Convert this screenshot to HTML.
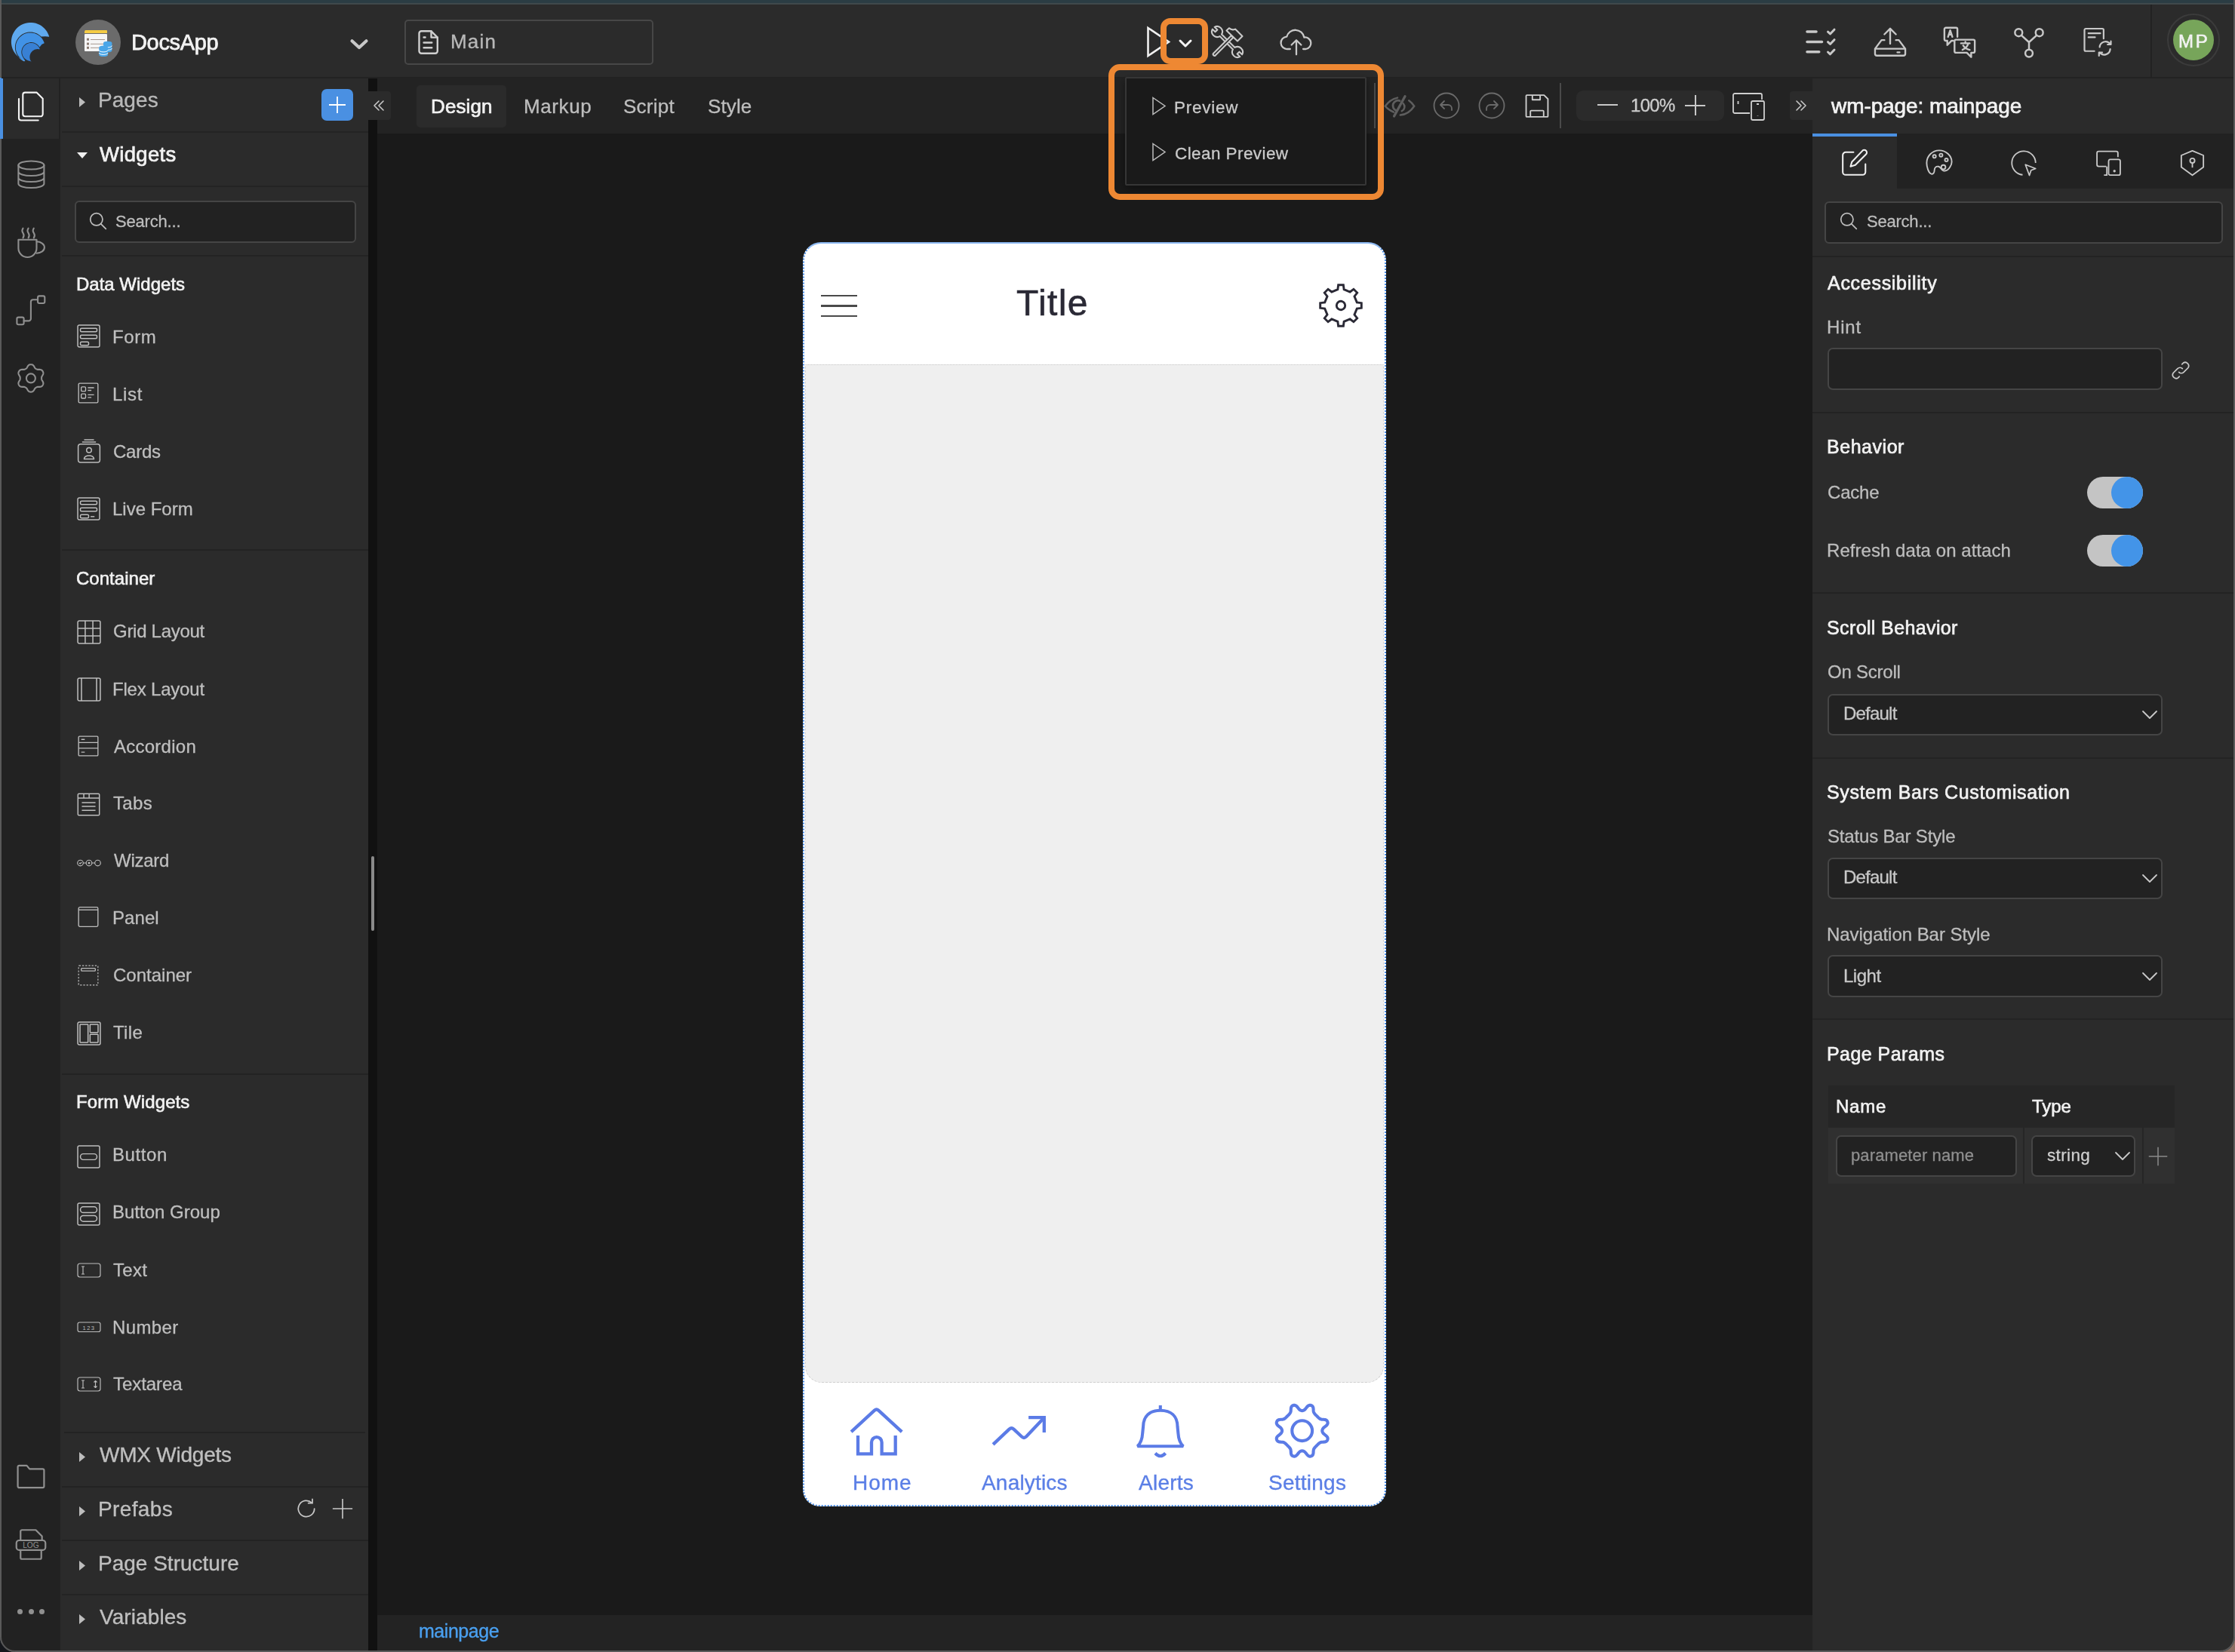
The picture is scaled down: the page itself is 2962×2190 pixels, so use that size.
<!DOCTYPE html><html><head><meta charset="utf-8"><style>
html,body{margin:0;padding:0;}
body{width:2962px;height:2190px;overflow:hidden;position:relative;background:#1c1c1c;font-family:"Liberation Sans",sans-serif;}
.t{position:absolute;line-height:1;white-space:nowrap;will-change:transform;}
.r{position:absolute;box-sizing:border-box;}
</style></head><body>
<div class="r" style="left:0px;top:0px;width:2962px;height:2190px;background:#2b2b2b;border-radius:0 0 16px 16px;"></div>
<div class="r" style="left:0px;top:0px;width:2962px;height:4px;background:#2b3d44;border-radius:0px;"></div>
<div class="r" style="left:0px;top:4px;width:2962px;height:2px;background:#40494c;border-radius:0px;"></div>
<div class="r" style="left:0px;top:0px;width:2px;height:2190px;background:#5a5a5a;border-radius:0 0 0 16px;"></div>
<div class="r" style="left:2px;top:6px;width:2958px;height:97px;background:#2b2b2b;border-radius:0px;"></div>
<div class="r" style="left:2px;top:102px;width:2958px;height:1px;background:#242424;border-radius:0px;"></div>
<div class="r" style="left:2px;top:103px;width:78px;height:2085px;background:#222222;border-radius:0px;"></div>
<div class="r" style="left:4px;top:103px;width:74px;height:81px;background:#2b2b2b;border-radius:0px;"></div>
<div class="r" style="left:0px;top:103px;width:4px;height:81px;background:#4a90e2;border-radius:0px;"></div>
<div class="r" style="left:80px;top:103px;width:408px;height:2085px;background:#2b2b2b;border-radius:0px;"></div>
<div class="r" style="left:82px;top:174px;width:406px;height:2px;background:#232323;border-radius:0px;"></div>
<div class="r" style="left:82px;top:246px;width:406px;height:2px;background:#232323;border-radius:0px;"></div>
<div class="r" style="left:82px;top:338px;width:406px;height:2px;background:#232323;border-radius:0px;"></div>
<div class="r" style="left:82px;top:728px;width:406px;height:2px;background:#232323;border-radius:0px;"></div>
<div class="r" style="left:82px;top:1423px;width:406px;height:2px;background:#232323;border-radius:0px;"></div>
<div class="r" style="left:82px;top:1970px;width:406px;height:2px;background:#232323;border-radius:0px;"></div>
<div class="r" style="left:82px;top:2041px;width:406px;height:2px;background:#232323;border-radius:0px;"></div>
<div class="r" style="left:82px;top:2113px;width:406px;height:2px;background:#232323;border-radius:0px;"></div>
<div class="r" style="left:85px;top:1898px;width:399px;height:2px;background:#232323;border-radius:0px;"></div>
<div class="r" style="left:488px;top:103px;width:12px;height:2085px;background:#111111;border-radius:0px;"></div>
<div class="r" style="left:492px;top:1135px;width:4px;height:99px;background:#8a8a8a;border-radius:2px;"></div>
<div class="r" style="left:500px;top:103px;width:1902px;height:74px;background:#232323;border-radius:0px;"></div>
<div class="r" style="left:500px;top:177px;width:1902px;height:1964px;background:#1a1a1a;border-radius:0px;"></div>
<div class="r" style="left:500px;top:2141px;width:1902px;height:47px;background:#232323;border-radius:0px;"></div>
<div class="r" style="left:2402px;top:103px;width:558px;height:2085px;background:#2b2b2b;border-radius:0px;"></div>
<div class="r" style="left:2402px;top:177px;width:558px;height:73px;background:#222222;border-radius:0px;"></div>
<div class="r" style="left:2402px;top:177px;width:112px;height:73px;background:#2b2b2b;border-radius:0px;"></div>
<div class="r" style="left:2402px;top:177px;width:112px;height:4px;background:#4a90e2;border-radius:0px;"></div>
<div class="r" style="left:2402px;top:338.5px;width:558px;height:2.0px;background:#232323;border-radius:0px;"></div>
<div class="r" style="left:2402px;top:546px;width:558px;height:2px;background:#232323;border-radius:0px;"></div>
<div class="r" style="left:2402px;top:785px;width:558px;height:2px;background:#232323;border-radius:0px;"></div>
<div class="r" style="left:2402px;top:1004px;width:558px;height:2px;background:#232323;border-radius:0px;"></div>
<div class="r" style="left:2402px;top:1350px;width:558px;height:2px;background:#232323;border-radius:0px;"></div>
<div class="r" style="left:2px;top:102px;width:2958px;height:2px;background:#222222;border-radius:0px;"></div>
<div class="r" style="left:2960px;top:0px;width:2px;height:2190px;background:#5a5a5a;border-radius:0px;"></div>
<div class="r" style="left:0px;top:2188px;width:2962px;height:2px;background:#5a5a5a;border-radius:0px;"></div>
<svg class="r" style="left:8px;top:24px;width:64px;height:64px;" viewBox="8 24 64 64" fill="none"><polygon points="65.23,48.87 64.41,46.35 63.33,43.92 62.01,41.61 60.45,39.46 58.68,37.48 56.71,35.69 54.57,34.12 52.28,32.77 49.86,31.67 47.34,30.83 44.75,30.25 42.11,29.95 39.45,29.92 36.80,30.17 34.20,30.69 31.66,31.47 29.22,32.52 26.90,33.81 24.72,35.34 22.72,37.08 20.90,39.03 19.30,41.15 17.93,43.42 16.80,45.83 15.92,48.34 15.31,50.92 14.97,53.56 14.91,56.21 15.12,58.86 15.61,61.48 16.36,64.02 17.37,66.48 18.64,68.82 20.14,71.01 21.85,73.04 23.77,74.88 25.87,76.51 28.13,77.91 30.52,79.07 33.02,79.98 32.27,81.49 30.65,80.72 29.11,79.81 27.66,78.76 26.30,77.60 25.06,76.32 23.92,74.93 22.92,73.45 22.05,71.89 21.32,70.26 20.74,68.57 20.30,66.83 20.03,65.06 19.91,63.28 19.94,61.49 20.14,59.71 20.49,57.96 20.99,56.24 21.64,54.58 22.44,52.97 23.37,51.45 24.44,50.01 25.62,48.67 26.92,47.44 28.33,46.34 29.82,45.35 31.40,44.51 33.04,43.80 34.74,43.25 36.48,42.84 38.25,42.59 40.04,42.50 41.83,42.57 43.60,42.79 45.35,43.16 47.06,43.69 48.71,44.37 50.30,45.19 51.81,46.15 53.24,47.24 54.55,48.45 60.00,48.20" fill="#5fa9ee"/><polygon points="58.80,57.29 58.14,55.43 57.30,53.64 56.28,51.95 55.09,50.37 53.75,48.92 52.27,47.61 50.66,46.46 48.95,45.48 47.14,44.68 45.26,44.07 43.33,43.65 41.37,43.44 39.39,43.42 37.42,43.60 35.49,43.98 33.60,44.56 31.78,45.32 30.04,46.27 28.41,47.39 26.91,48.67 25.54,50.09 24.32,51.65 23.27,53.32 22.40,55.10 21.70,56.95 21.20,58.86 20.90,60.81 20.80,62.78 20.90,64.76 21.20,66.71 21.69,68.62 22.38,70.47 23.25,72.25 24.30,73.92 25.52,75.48 26.88,76.91 28.39,78.19 30.01,79.31 31.75,80.26 33.56,81.03 30.13,75.45 29.66,74.55 29.26,73.62 28.93,72.66 28.68,71.68 28.51,70.68 28.42,69.68 28.40,68.66 28.47,67.65 28.62,66.65 28.84,65.66 29.14,64.69 29.52,63.75 29.96,62.84 30.48,61.97 31.07,61.15 31.71,60.37 32.42,59.64 33.18,58.97 33.99,58.37 34.85,57.83 35.75,57.36 36.68,56.96 37.64,56.63 38.62,56.38 39.62,56.21 40.62,56.12 41.64,56.10 42.65,56.17 43.65,56.32 44.64,56.54 45.61,56.84 46.55,57.22 47.46,57.66 48.33,58.18 49.15,58.77 49.93,59.41 50.66,60.12 51.33,60.88 51.93,61.69 52.47,62.55 55.50,58.80" fill="#4192e6"/><polygon points="52.52,64.47 51.98,63.31 51.31,62.21 50.54,61.19 49.66,60.25 48.69,59.42 47.63,58.69 46.50,58.08 45.32,57.59 44.09,57.23 42.83,57.00 41.55,56.90 40.27,56.94 39.00,57.12 37.75,57.43 36.55,57.87 35.40,58.44 34.31,59.12 33.31,59.92 32.39,60.81 31.57,61.80 30.87,62.87 30.28,64.01 29.81,65.21 29.47,66.44 29.27,67.71 29.20,68.99 29.27,70.27 29.47,71.54 29.80,72.77 30.27,73.97 30.86,75.11 31.56,76.18 32.38,77.17 33.29,78.07 34.30,78.87 35.38,79.55 36.53,80.12 37.73,80.56 38.98,80.87 40.25,81.05 41.98,82.49 41.55,81.97 41.16,81.43 40.81,80.86 40.50,80.27 40.22,79.66 39.98,79.04 39.78,78.40 39.62,77.75 39.51,77.09 39.43,76.42 39.40,75.76 39.41,75.09 39.47,74.42 39.56,73.76 39.70,73.10 39.88,72.46 40.10,71.83 40.36,71.21 40.66,70.61 41.00,70.04 41.37,69.48 41.77,68.95 42.21,68.45 42.69,67.97 43.19,67.53 43.71,67.12 44.27,66.74 44.84,66.40 45.44,66.10 46.05,65.83 46.68,65.61 47.32,65.42 47.98,65.28 48.64,65.18 49.30,65.12 49.97,65.10 50.64,65.13 51.31,65.19 51.97,65.31 52.62,65.46" fill="#3880d4"/></svg>
<div class="r" style="left:100px;top:26px;width:60px;height:60px;background:#6b6b6b;border-radius:30px;"></div>
<svg class="r" style="left:100px;top:26px;width:60px;height:60px;" viewBox="100 26 60 60" fill="none"><rect x="112" y="45" width="30" height="23" rx="1" fill="#f6f6f6"/><path d="M113 40h28a1 1 0 0 1 1 1v3h-30v-2.5z" fill="#f5cc45"/><g fill="#8b7b72"><rect x="115" y="50.7" width="3" height="3"/><rect x="115" y="56.6" width="3" height="3"/><rect x="115" y="61.8" width="3" height="3"/></g><g stroke="#9c8d84" stroke-width="0.9"><path d="M120 52.5h19M120 58.3h18M120 63.4h16"/></g><g fill="#4aa6e8"><path d="M137 57a5.7 2.3 0 0 1 11.4 0v10a5.7 2.3 0 0 1-11.4 0z"/></g><g stroke="#fff" stroke-width="0.9" fill="none"><path d="M137 60.5a5.7 2.3 0 0 0 11.4 0M137 64a5.7 2.3 0 0 0 11.4 0"/></g><g fill="#4aa6e8"><path d="M131.2 63a5.9 2.4 0 0 1 11.8 0v9.7a5.9 2.4 0 0 1-11.8 0z"/></g><g stroke="#fff" stroke-width="1" fill="none"><path d="M131.2 66.5a5.9 2.4 0 0 0 11.8 0M131.2 70a5.9 2.4 0 0 0 11.8 0"/></g></svg>
<div class="t" style="left:174.25px;top:42.45px;font-size:29px;color:#f2f2f2;letter-spacing:-0.33px;-webkit-text-stroke:0.75px #f2f2f2;">DocsApp</div>
<svg class="r" style="left:455px;top:45px;width:40px;height:27px;" viewBox="455 45 40 27" fill="none"><path d="M466.5 54.3 L476 63 L485.5 54.3" stroke="#c8c8c8" stroke-width="4.2" stroke-linecap="round" stroke-linejoin="round" fill="none"/></svg>
<div class="r" style="left:536px;top:26px;width:330px;height:60px;background:transparent;border-radius:5px;border:2px solid #474747"></div>
<svg class="r" style="left:550px;top:36px;width:36px;height:40px;" viewBox="550 36 36 40" fill="none"><g stroke="#cfcfcf" stroke-width="2.4" stroke-linejoin="round" stroke-linecap="round" fill="none"><path d="M558.5 41.3 H571.5 L579.8 49.6 V67.7 A3 3 0 0 1 576.8 70.7 H558.5 A3 3 0 0 1 555.5 67.7 V44.3 A3 3 0 0 1 558.5 41.3 Z"/><path d="M571.5 41.3 V49.6 H579.8"/><path d="M561.6 49.5 H563.6 M561.6 56.5 H572.3 M561.6 63.3 H572.3"/></g></svg>
<div class="t" style="left:596.75px;top:42.49px;font-size:26px;color:#b8b8b8;letter-spacing:1.17px;-webkit-text-stroke:0.34px #b8b8b8;">Main</div>
<svg class="r" style="left:1518px;top:34px;width:35px;height:43px;" viewBox="0 0 35 43" fill="none"><path d="M3.5 3 L31 21.5 L3.5 40Z" stroke="#f0f0f0" stroke-width="2.6" stroke-linejoin="miter"/></svg>
<div class="r" style="left:1538px;top:24px;width:63px;height:61px;background:transparent;border-radius:13px;border:8px solid #ee8833"></div>
<svg class="r" style="left:1561px;top:51px;width:20px;height:14px;" viewBox="0 0 20 14" fill="none"><path d="M3 3 L10 10 L17 3" stroke="#f4f4f4" stroke-width="3" stroke-linecap="round" stroke-linejoin="round"/></svg>
<svg class="r" style="left:1604px;top:33px;width:45px;height:45px;" viewBox="0 0 45 45" fill="none"><g stroke="#cacaca" stroke-width="2.1" stroke-linejoin="round" fill="none"><path d="M15.05 12.51 A7 7 0 0 0 5.67 2.85 L9.35 6.53 L6.53 9.35 L2.85 5.67 A7 7 0 0 0 12.51 15.05 L29.95 32.49 A7 7 0 0 0 39.33 42.15 L35.65 38.47 L38.47 35.65 L42.15 39.33 A7 7 0 0 0 32.49 29.95 Z"/></g><g stroke="#cacaca" stroke-width="2.1" stroke-linejoin="round" fill="#2b2b2b"><path d="M4.16 37.66 L27.66 14.16 L30.34 16.84 L6.84 40.34 A1.9 1.9 0 0 1 4.16 37.66 Z"/><path d="M21.5 7.6 L25 4.3 Q28.5 7.6 33 5.6 L42.5 15 L36 21.5 Z"/></g></svg>
<svg class="r" style="left:1696px;top:35px;width:44px;height:40px;" viewBox="0 0 24 22" fill="none"><g stroke="#c8c8c8" stroke-width="1.25" stroke-linecap="round" stroke-linejoin="round"><path d="M7.5 16.5h-2a4.5 4.5 0 0 1-0.5-9 6.5 6.5 0 0 1 12.7 0.5 4 4 0 0 1 1.3 8.5h-2"/><path d="M12 20.5v-10M8.5 13.5l3.5-3.5 3.5 3.5"/></g></svg>
<svg class="r" style="left:2385px;top:30px;width:55px;height:50px;" viewBox="2385 30 55 50" fill="none"><g stroke="#c8c8c8" stroke-width="3.6" stroke-linecap="round" stroke-linejoin="round" fill="none"><path d="M2395 42 H2407 M2395 55.5 H2414.5 M2395 68.75 H2410.7"/></g><g stroke="#c8c8c8" stroke-width="3" stroke-linecap="round" stroke-linejoin="round" fill="none"><path d="M2422.5 42.2 L2425.5 45 L2431 39.2 M2422.5 55.7 L2425.5 58.5 L2431 52.7 M2422.5 69 L2425.5 71.8 L2431 66"/></g></svg>
<svg class="r" style="left:2482px;top:35px;width:46px;height:42px;" viewBox="0 0 24 22" fill="none"><g stroke="#c8c8c8" stroke-width="1.25" stroke-linecap="round" stroke-linejoin="round"><path d="M12 12V1.5M8 5.5l4-4 4 4"/><path d="M8 9.5H6l-4.5 6v3.5a1.3 1.3 0 0 0 1.3 1.3h18.4a1.3 1.3 0 0 0 1.3-1.3v-3.5L18 9.5h-2M1.5 15.5h21M17 18h1.5"/></g></svg>
<svg class="r" style="left:2574px;top:34px;width:46px;height:43px;" viewBox="0 0 24 22" fill="none"><g stroke="#c8c8c8" stroke-width="1.25" stroke-linecap="round" stroke-linejoin="round"><path d="M10.5 7.5V2.2a1 1 0 0 0-1-1h-7a1 1 0 0 0-1 1v7a1 1 0 0 0 1 1h1v3l3-3h1"/><path d="M4 7.5l1.5-4.5 1.5 4.5M4.5 6h2"/><path d="M9.5 9.5h12a1 1 0 0 1 1 1v7a1 1 0 0 1-1 1h-1.5v3l-3-3h-7.5a1 1 0 0 1-1-1v-7a1 1 0 0 1 1-1z"/><path d="M13 12h6M16 11v1M14 16.5c2-1 3.5-2.5 4-4.5M14.5 13.5c1 1.5 2.5 2.5 4.5 3"/></g></svg>
<svg class="r" style="left:2667px;top:35px;width:44px;height:42px;" viewBox="0 0 24 23" fill="none"><g stroke="#c8c8c8" stroke-width="1.35" stroke-linecap="round" stroke-linejoin="round"><circle cx="4.5" cy="4.5" r="2.7"/><circle cx="19.5" cy="4.5" r="2.7"/><circle cx="12" cy="19.5" r="2.7"/><path d="M6.5 6.5L12 11.5l5.5-5M12 11.5v5.3"/></g></svg>
<svg class="r" style="left:2759px;top:35px;width:42px;height:41px;" viewBox="0 0 24 23" fill="none"><g stroke="#c8c8c8" stroke-width="1.25" stroke-linecap="round" stroke-linejoin="round"><path d="M9.5 18.5h-6.5a1 1 0 0 1-1-1v-15a1 1 0 0 1 1-1h12.5a1 1 0 0 1 1 1V9"/><path d="M5 5h9M5 8h5"/><path d="M13.5 15.5a4.5 4.5 0 0 1 8-2.5M22 11v2.5h-2.5M21.5 17a4.5 4.5 0 0 1-8 2.5M13 22v-2.5h2.5"/></g></svg>
<div class="r" style="left:2850px;top:6px;width:2px;height:97px;background:#222222;border-radius:0px;"></div>
<div class="r" style="left:2872px;top:18px;width:70px;height:70px;background:transparent;border-radius:35px;border:2px solid #3b3b3b"></div>
<div class="r" style="left:2880px;top:26px;width:54px;height:54px;background:#77a55a;border-radius:27px;"></div>
<div class="t" style="left:2887.00px;top:42.68px;font-size:24px;color:#f2f2f2;letter-spacing:2.75px;-webkit-text-stroke:0.62px #f2f2f2;">MP</div>
<svg class="r" style="left:0px;top:100px;width:80px;height:440px;" viewBox="0 100 80 440" fill="none"><g stroke="#f4f4f4" stroke-width="2.1" stroke-linejoin="round" stroke-linecap="round" fill="none"><path d="M33.3 122.6 H48.5 L56.7 130.8 V151.3 A3 3 0 0 1 53.7 154.3 H33.3 A3 3 0 0 1 30.3 151.3 V125.6 A3 3 0 0 1 33.3 122.6 Z"/><path d="M25 131 V156.5 A3 3 0 0 0 28 159.5 H50.7"/></g><g stroke="#8f8f8f" stroke-width="2.1" stroke-linejoin="round" stroke-linecap="round" fill="none"><ellipse cx="41.4" cy="219" rx="17" ry="5.5"/><path d="M24.4 219 V243.5 A17 5.5 0 0 0 58.4 243.5 V219 M24.4 227.5 A17 5.5 0 0 0 58.4 227.5 M24.4 235.5 A17 5.5 0 0 0 58.4 235.5"/><path d="M24.4 317.8 H48.5 V329 A12.05 12 0 0 1 24.4 329 Z"/><path d="M48.5 320.3 A10.4 7.7 0 0 1 48.5 335.7"/><path d="M30.5 302.5 q-2.2 3.2 0 6.4 q2.2 3.2 0 6.4 M37.6 302.5 q-2.2 3.2 0 6.4 q2.2 3.2 0 6.4 M44.8 302.5 q-2.2 3.2 0 6.4 q2.2 3.2 0 6.4"/><rect x="22.4" y="420.6" width="9.2" height="9.6" rx="2"/><rect x="50.1" y="392.4" width="9.2" height="9.6" rx="2"/><path d="M31.6 425.4 H37.9 A3 3 0 0 0 40.9 422.4 V400.2 A3 3 0 0 1 43.9 397.2 H50.1"/><path d="M40.90 483.20 L41.53 483.22 L42.17 483.31 L42.78 483.48 L43.38 483.77 L43.93 484.20 L44.44 484.74 L44.90 485.36 L45.31 486.02 L45.68 486.69 L46.02 487.32 L46.37 487.86 L46.74 488.28 L47.14 488.60 L47.57 488.86 L48.00 489.10 L48.43 489.35 L48.87 489.59 L49.34 489.78 L49.89 489.90 L50.53 489.92 L51.25 489.91 L52.01 489.89 L52.79 489.91 L53.56 490.00 L54.28 490.17 L54.93 490.44 L55.48 490.81 L55.94 491.26 L56.33 491.76 L56.66 492.30 L56.96 492.86 L57.20 493.45 L57.36 494.07 L57.40 494.73 L57.31 495.43 L57.10 496.14 L56.79 496.84 L56.42 497.53 L56.03 498.18 L55.65 498.80 L55.36 499.37 L55.18 499.90 L55.11 500.41 L55.10 500.90 L55.10 501.40 L55.10 501.90 L55.11 502.39 L55.18 502.90 L55.36 503.43 L55.65 504.00 L56.03 504.62 L56.42 505.27 L56.79 505.96 L57.10 506.66 L57.31 507.37 L57.40 508.07 L57.36 508.73 L57.20 509.35 L56.96 509.94 L56.66 510.50 L56.33 511.04 L55.94 511.54 L55.48 511.99 L54.93 512.36 L54.28 512.63 L53.56 512.80 L52.79 512.89 L52.01 512.91 L51.25 512.89 L50.53 512.88 L49.89 512.90 L49.34 513.02 L48.87 513.21 L48.43 513.45 L48.00 513.70 L47.57 513.94 L47.14 514.20 L46.74 514.52 L46.37 514.94 L46.02 515.48 L45.68 516.11 L45.31 516.78 L44.90 517.44 L44.44 518.06 L43.93 518.60 L43.38 519.03 L42.78 519.32 L42.17 519.49 L41.53 519.58 L40.90 519.60 L40.27 519.58 L39.63 519.49 L39.02 519.32 L38.42 519.03 L37.87 518.60 L37.36 518.06 L36.90 517.44 L36.49 516.78 L36.12 516.11 L35.78 515.48 L35.43 514.94 L35.06 514.52 L34.66 514.20 L34.23 513.94 L33.80 513.70 L33.37 513.45 L32.93 513.21 L32.46 513.02 L31.91 512.90 L31.27 512.88 L30.55 512.89 L29.79 512.91 L29.01 512.89 L28.24 512.80 L27.52 512.63 L26.87 512.36 L26.32 511.99 L25.86 511.54 L25.47 511.04 L25.14 510.50 L24.84 509.94 L24.60 509.35 L24.44 508.73 L24.40 508.07 L24.49 507.37 L24.70 506.66 L25.01 505.96 L25.38 505.27 L25.77 504.62 L26.15 504.00 L26.44 503.43 L26.62 502.90 L26.69 502.39 L26.70 501.90 L26.70 501.40 L26.70 500.90 L26.69 500.41 L26.62 499.90 L26.44 499.37 L26.15 498.80 L25.77 498.18 L25.38 497.53 L25.01 496.84 L24.70 496.14 L24.49 495.43 L24.40 494.73 L24.44 494.07 L24.60 493.45 L24.84 492.86 L25.14 492.30 L25.47 491.76 L25.86 491.26 L26.32 490.81 L26.87 490.44 L27.52 490.17 L28.24 490.00 L29.01 489.91 L29.79 489.89 L30.55 489.91 L31.27 489.92 L31.91 489.90 L32.46 489.78 L32.93 489.59 L33.37 489.35 L33.80 489.10 L34.23 488.86 L34.66 488.60 L35.06 488.28 L35.43 487.86 L35.78 487.32 L36.12 486.69 L36.49 486.02 L36.90 485.36 L37.36 484.74 L37.87 484.20 L38.42 483.77 L39.02 483.48 L39.63 483.31 L40.27 483.22Z"/><circle cx="40.9" cy="501.4" r="6"/></g></svg>
<svg class="r" style="left:19px;top:1939px;width:44px;height:37px;" viewBox="0 0 24 20" fill="none"><path d="M2.5 3a1 1 0 0 1 1-1h5.5l2 2.5h9.5a1 1 0 0 1 1 1v11.5a1 1 0 0 1-1 1h-17a1 1 0 0 1-1-1z" stroke="#909090" stroke-width="1.2" stroke-linejoin="round"/></svg>
<svg class="r" style="left:19px;top:2025px;width:44px;height:45px;" viewBox="0 0 24 24" fill="none"><g stroke="#909090" stroke-width="1.2" stroke-linejoin="round"><path d="M4.5 9V2.5a1 1 0 0 1 1-1h10l4.5 4.5V9"/><rect x="1.5" y="9" width="21" height="7" rx="2"/><path d="M4.5 16v5.5a1 1 0 0 0 1 1h13a1 1 0 0 0 1-1V16"/></g><text x="12" y="14.6" font-size="5.6" text-anchor="middle" fill="#909090" font-family="Liberation Sans">LOG</text></svg>
<div class="r" style="left:23.0px;top:2133px;width:7.0px;height:7px;background:#909090;border-radius:4px;"></div>
<div class="r" style="left:37.5px;top:2133px;width:7.0px;height:7px;background:#909090;border-radius:4px;"></div>
<div class="r" style="left:52.0px;top:2133px;width:7.0px;height:7px;background:#909090;border-radius:4px;"></div>
<svg class="r" style="left:104px;top:128px;width:11px;height:15px;" viewBox="0 0 11 15" fill="none"><path d="M1 1 L9 7.5 L1 14Z" fill="#bdbdbd"/></svg>
<div class="t" style="left:130.25px;top:119.29px;font-size:28px;color:#b9b9b9;letter-spacing:0.06px;-webkit-text-stroke:0.36px #b9b9b9;">Pages</div>
<div class="r" style="left:426px;top:118px;width:42px;height:42px;background:#4a90e2;border-radius:7px;"></div>
<svg class="r" style="left:426px;top:118px;width:42px;height:42px;" viewBox="0 0 42 42" fill="none"><path d="M21 10v22M10 21h22" stroke="#fff" stroke-width="1.8"/></svg>
<svg class="r" style="left:101px;top:201px;width:16px;height:11px;" viewBox="0 0 16 11" fill="none"><path d="M1 1 L15 1 L8 9Z" fill="#f0f0f0"/></svg>
<div class="t" style="left:132.25px;top:191.22px;font-size:27.5px;color:#f2f2f2;letter-spacing:0.33px;-webkit-text-stroke:0.71px #f2f2f2;">Widgets</div>
<div class="r" style="left:99px;top:266px;width:373px;height:56px;background:#222222;border-radius:6px;border:2px solid #454545"></div>
<svg class="r" style="left:117px;top:280px;width:26px;height:26px;" viewBox="0 0 24 24" fill="none"><g stroke="#bdbdbd" stroke-width="1.6" stroke-linecap="round"><circle cx="10" cy="10" r="7.5"/><path d="M15.5 15.5l6 6"/></g></svg>
<div class="t" style="left:152.75px;top:283.37px;font-size:22px;color:#bdbdbd;letter-spacing:-0.19px;-webkit-text-stroke:0.29px #bdbdbd;">Search...</div>
<div class="t" style="left:100.50px;top:364.68px;font-size:24px;color:#f2f2f2;-webkit-text-stroke:0.62px #f2f2f2;">Data Widgets</div>
<div class="t" style="left:101.25px;top:754.68px;font-size:24px;color:#f2f2f2;letter-spacing:0.03px;-webkit-text-stroke:0.62px #f2f2f2;">Container</div>
<div class="t" style="left:100.50px;top:1449.18px;font-size:24px;color:#f2f2f2;letter-spacing:0.09px;-webkit-text-stroke:0.62px #f2f2f2;">Form Widgets</div>
<div class="t" style="left:148.75px;top:434.68px;font-size:24px;color:#bfbfbf;letter-spacing:0.58px;-webkit-text-stroke:0.31px #bfbfbf;">Form</div>
<svg class="r" style="left:102px;top:430px;width:31px;height:31px;" viewBox="0 0 24 24" fill="none"><g stroke="#bdbdbd" stroke-width="1.15" stroke-linejoin="round"><rect x="0.8" y="0.8" width="22.4" height="22.4" rx="1.5"/><rect x="3.5" y="4" width="17" height="3.5" rx="1.2"/><rect x="3.5" y="11" width="17" height="3.5" rx="1.2"/><rect x="3.5" y="18" width="8.5" height="3.5" rx="1.2"/></g></svg>
<div class="t" style="left:148.75px;top:510.68px;font-size:24px;color:#bfbfbf;letter-spacing:0.67px;-webkit-text-stroke:0.31px #bfbfbf;">List</div>
<svg class="r" style="left:103px;top:507px;width:28px;height:28px;" viewBox="0 0 24 24" fill="none"><g stroke="#bdbdbd" stroke-width="1.15" stroke-linejoin="round"><rect x="1" y="1" width="22" height="22" rx="1.2"/><rect x="4" y="5" width="5" height="5" rx="1"/><rect x="4" y="13" width="5" height="5" rx="1"/><path d="M11.5 6h7M11.5 9h4M11.5 14h7M11.5 17h4"/></g></svg>
<div class="t" style="left:149.50px;top:587.18px;font-size:24px;color:#bfbfbf;letter-spacing:-0.25px;-webkit-text-stroke:0.31px #bfbfbf;">Cards</div>
<svg class="r" style="left:102px;top:580.5px;width:32px;height:34.0px;" viewBox="0 0 24 26" fill="none"><g stroke="#bdbdbd" stroke-width="1.15" stroke-linejoin="round"><path d="M7 1.5h10M5 3.8h14"/><rect x="1" y="6" width="22" height="18.5" rx="2.5"/><circle cx="12" cy="12" r="2.5"/><path d="M7 21a5 3.5 0 0 1 10 0z"/></g></svg>
<div class="t" style="left:148.75px;top:663.43px;font-size:24px;color:#bfbfbf;-webkit-text-stroke:0.31px #bfbfbf;">Live Form</div>
<svg class="r" style="left:102px;top:658.75px;width:31px;height:31.0px;" viewBox="0 0 24 24" fill="none"><g stroke="#bdbdbd" stroke-width="1.15" stroke-linejoin="round"><rect x="0.8" y="0.8" width="22.4" height="22.4" rx="1.5"/><rect x="3.5" y="4" width="17" height="3.5" rx="1.2"/><rect x="3.5" y="11" width="17" height="3.5" rx="1.2"/><rect x="3.5" y="18" width="8.5" height="3.5" rx="1.2"/><path d="M14 20h4"/></g></svg>
<div class="t" style="left:149.50px;top:825.43px;font-size:24px;color:#bfbfbf;letter-spacing:-0.28px;-webkit-text-stroke:0.31px #bfbfbf;">Grid Layout</div>
<svg class="r" style="left:102px;top:821.75px;width:32px;height:32.0px;" viewBox="0 0 24 24" fill="none"><g stroke="#bdbdbd" stroke-width="1.15" stroke-linejoin="round"><rect x="0.8" y="0.8" width="22.4" height="22.4" rx="1.5"/><path d="M8.2 0.8v22.4M15.8 0.8v22.4M0.8 8.2h22.4M0.8 15.8h22.4"/></g></svg>
<div class="t" style="left:148.75px;top:901.68px;font-size:24px;color:#bfbfbf;letter-spacing:-0.20px;-webkit-text-stroke:0.31px #bfbfbf;">Flex Layout</div>
<svg class="r" style="left:102px;top:898px;width:32px;height:32px;" viewBox="0 0 24 24" fill="none"><g stroke="#bdbdbd" stroke-width="1.15" stroke-linejoin="round"><rect x="0.8" y="0.8" width="22.4" height="22.4" rx="1.5"/><path d="M4.5 0.8v22.4M19.5 0.8v22.4"/></g></svg>
<div class="t" style="left:150.75px;top:977.68px;font-size:24px;color:#bfbfbf;letter-spacing:0.25px;-webkit-text-stroke:0.31px #bfbfbf;">Accordion</div>
<svg class="r" style="left:103px;top:975px;width:28px;height:28px;" viewBox="0 0 24 24" fill="none"><g stroke="#bdbdbd" stroke-width="1.15" stroke-linejoin="round"><rect x="1" y="1" width="22" height="22" rx="1"/><path d="M1 8h22M1 14.5h22M4 4.5h4M4 19h4"/></g></svg>
<div class="t" style="left:150.25px;top:1053.43px;font-size:24px;color:#bfbfbf;letter-spacing:0.33px;-webkit-text-stroke:0.31px #bfbfbf;">Tabs</div>
<svg class="r" style="left:102px;top:1050.75px;width:31px;height:31.0px;" viewBox="0 0 24 24" fill="none"><g stroke="#bdbdbd" stroke-width="1.15" stroke-linejoin="round"><rect x="1" y="1" width="22" height="22" rx="1"/><path d="M1 5.5h22M7 1v4.5M12.5 1v4.5M5 10h14M5 14h14M5 18h14"/></g></svg>
<div class="t" style="left:150.75px;top:1129.18px;font-size:24px;color:#bfbfbf;letter-spacing:-0.25px;-webkit-text-stroke:0.31px #bfbfbf;">Wizard</div>
<svg class="r" style="left:102px;top:1138.5px;width:32px;height:10.0px;" viewBox="0 0 32 10" fill="none"><g stroke="#bdbdbd" stroke-width="1.15" stroke-linejoin="round"><circle cx="4.5" cy="5" r="3.8"/><circle cx="16" cy="5" r="3.8"/><circle cx="27.5" cy="5" r="3.8"/><path d="M8.3 5h3.9M19.8 5h3.9M3 5l1.2 1.2 2-2.2"/></g><circle cx="16" cy="5" r="1.5" fill="#bdbdbd"/></svg>
<div class="t" style="left:148.75px;top:1205.43px;font-size:24px;color:#bfbfbf;letter-spacing:0.06px;-webkit-text-stroke:0.31px #bfbfbf;">Panel</div>
<svg class="r" style="left:103px;top:1200.75px;width:28px;height:29.0px;" viewBox="0 0 24 24" fill="none"><g stroke="#bdbdbd" stroke-width="1.15" stroke-linejoin="round"><rect x="1" y="1" width="22" height="22" rx="1.5"/><path d="M1 4h22"/></g></svg>
<div class="t" style="left:149.50px;top:1281.43px;font-size:24px;color:#bfbfbf;-webkit-text-stroke:0.31px #bfbfbf;">Container</div>
<svg class="r" style="left:103px;top:1278.75px;width:28px;height:28.0px;" viewBox="0 0 24 24" fill="none"><g stroke="#bdbdbd" stroke-width="1" stroke-dasharray="2 1.6"><rect x="1" y="1" width="22" height="22" rx="0.5"/></g><g stroke="#bdbdbd" stroke-width="1.15" stroke-linejoin="round"><rect x="4" y="4" width="16" height="3" rx="0.8"/></g></svg>
<div class="t" style="left:150.25px;top:1357.18px;font-size:24px;color:#bfbfbf;letter-spacing:0.33px;-webkit-text-stroke:0.31px #bfbfbf;">Tile</div>
<svg class="r" style="left:102px;top:1353.5px;width:32px;height:32.0px;" viewBox="0 0 24 24" fill="none"><g stroke="#bdbdbd" stroke-width="1.15" stroke-linejoin="round"><rect x="0.8" y="0.8" width="22.4" height="22.4" rx="1.5"/><rect x="3" y="3" width="8" height="18" rx="0.5"/><rect x="13" y="3" width="8" height="8" rx="0.5"/><rect x="13" y="13" width="8" height="8" rx="0.5"/></g></svg>
<div class="t" style="left:148.75px;top:1519.18px;font-size:24px;color:#bfbfbf;letter-spacing:0.60px;-webkit-text-stroke:0.31px #bfbfbf;">Button</div>
<svg class="r" style="left:102px;top:1517.5px;width:31px;height:31.0px;" viewBox="0 0 24 24" fill="none"><g stroke="#bdbdbd" stroke-width="1.15" stroke-linejoin="round"><rect x="0.8" y="0.8" width="22.4" height="22.4" rx="1.5"/><rect x="3.5" y="9" width="17" height="6" rx="3"/></g></svg>
<div class="t" style="left:148.75px;top:1595.43px;font-size:24px;color:#bfbfbf;-webkit-text-stroke:0.31px #bfbfbf;">Button Group</div>
<svg class="r" style="left:102px;top:1593.75px;width:31px;height:31.0px;" viewBox="0 0 24 24" fill="none"><g stroke="#bdbdbd" stroke-width="1.15" stroke-linejoin="round"><rect x="0.8" y="0.8" width="22.4" height="22.4" rx="1.5"/><rect x="3.5" y="4.5" width="17" height="6" rx="3"/><rect x="3.5" y="13.5" width="17" height="6" rx="3"/></g></svg>
<div class="t" style="left:150.25px;top:1671.68px;font-size:24px;color:#bfbfbf;letter-spacing:0.33px;-webkit-text-stroke:0.31px #bfbfbf;">Text</div>
<svg class="r" style="left:102px;top:1674px;width:32px;height:20px;" viewBox="0 0 32 20" fill="none"><g stroke="#bdbdbd" stroke-width="1.15" stroke-linejoin="round"><rect x="1" y="1" width="30" height="18" rx="3"/><path d="M6 5h4M6 15h4M8 5v10"/></g></svg>
<div class="t" style="left:148.75px;top:1747.68px;font-size:24px;color:#bfbfbf;letter-spacing:0.40px;-webkit-text-stroke:0.31px #bfbfbf;">Number</div>
<svg class="r" style="left:102px;top:1752px;width:32px;height:16px;" viewBox="0 0 32 16" fill="none"><g stroke="#bdbdbd" stroke-width="1.15" stroke-linejoin="round"><rect x="1" y="1" width="30" height="12.5" rx="2.5"/></g><text x="16" y="10.5" font-size="7.5" text-anchor="middle" fill="#bdbdbd" font-family="Liberation Sans" letter-spacing="1.5">123</text></svg>
<div class="t" style="left:150.25px;top:1823.43px;font-size:24px;color:#bfbfbf;letter-spacing:-0.07px;-webkit-text-stroke:0.31px #bfbfbf;">Textarea</div>
<svg class="r" style="left:102px;top:1824.75px;width:32px;height:20.0px;" viewBox="0 0 32 20" fill="none"><g stroke="#bdbdbd" stroke-width="1.15" stroke-linejoin="round"><rect x="1" y="1" width="30" height="18" rx="3"/><path d="M6 5h4M6 15h4M8 5v10M24.5 5.5v9M22.5 7.5l2-2 2 2M22.5 12.5l2 2 2-2"/></g></svg>
<svg class="r" style="left:104px;top:1924px;width:11px;height:15px;" viewBox="0 0 11 15" fill="none"><path d="M1 1 L9 7.5 L1 14Z" fill="#bdbdbd"/></svg>
<div class="t" style="left:132.25px;top:1915.29px;font-size:28px;color:#bfbfbf;letter-spacing:-0.23px;-webkit-text-stroke:0.36px #bfbfbf;">WMX Widgets</div>
<svg class="r" style="left:104px;top:1996px;width:11px;height:15px;" viewBox="0 0 11 15" fill="none"><path d="M1 1 L9 7.5 L1 14Z" fill="#bdbdbd"/></svg>
<div class="t" style="left:130.25px;top:1987.29px;font-size:28px;color:#bfbfbf;letter-spacing:0.38px;-webkit-text-stroke:0.36px #bfbfbf;">Prefabs</div>
<svg class="r" style="left:104px;top:2067.5px;width:11px;height:15.0px;" viewBox="0 0 11 15" fill="none"><path d="M1 1 L9 7.5 L1 14Z" fill="#bdbdbd"/></svg>
<div class="t" style="left:130.25px;top:2058.79px;font-size:28px;color:#bfbfbf;-webkit-text-stroke:0.36px #bfbfbf;">Page Structure</div>
<svg class="r" style="left:104px;top:2139px;width:11px;height:15px;" viewBox="0 0 11 15" fill="none"><path d="M1 1 L9 7.5 L1 14Z" fill="#bdbdbd"/></svg>
<div class="t" style="left:132.25px;top:2130.29px;font-size:28px;color:#bfbfbf;letter-spacing:0.09px;-webkit-text-stroke:0.36px #bfbfbf;">Variables</div>
<svg class="r" style="left:390px;top:1984px;width:32px;height:32px;" viewBox="0 0 24 24" fill="none"><g stroke="#c8c8c8" stroke-width="1.3" stroke-linecap="round"><path d="M20 12a8 8 0 1 1-2.5-5.8"/><path d="M18 2.5v4h-4"/></g></svg>
<svg class="r" style="left:439px;top:1985px;width:30px;height:30px;" viewBox="0 0 24 24" fill="none"><path d="M12 1.5v21M1.5 12h21" stroke="#c8c8c8" stroke-width="1.3"/></svg>
<div class="r" style="left:488px;top:121px;width:30px;height:38px;background:#2b2b2b;border-radius:0 4px 4px 0;"></div>
<svg class="r" style="left:492px;top:130px;width:20px;height:20px;" viewBox="0 0 20 20" fill="none"><path d="M10 4l-6 6 6 6M16 4l-6 6 6 6" stroke="#c8c8c8" stroke-width="1.6" stroke-linecap="round" stroke-linejoin="round"/></svg>
<div class="r" style="left:552px;top:113px;width:119px;height:56px;background:#2b2b2b;border-radius:5px;"></div>
<div class="t" style="left:571.00px;top:127.99px;font-size:26px;color:#f2f2f2;letter-spacing:0.10px;-webkit-text-stroke:0.68px #f2f2f2;">Design</div>
<div class="t" style="left:694.25px;top:127.99px;font-size:26px;color:#bdbdbd;letter-spacing:0.60px;-webkit-text-stroke:0.34px #bdbdbd;">Markup</div>
<div class="t" style="left:826.25px;top:127.99px;font-size:26px;color:#bdbdbd;letter-spacing:0.25px;-webkit-text-stroke:0.34px #bdbdbd;">Script</div>
<div class="t" style="left:937.50px;top:127.99px;font-size:26px;color:#bdbdbd;letter-spacing:0.12px;-webkit-text-stroke:0.34px #bdbdbd;">Style</div>
<div class="r" style="left:1821px;top:110px;width:2px;height:60px;background:#4a4a4a;border-radius:0px;"></div>
<svg class="r" style="left:1830px;top:122px;width:50px;height:38px;" viewBox="1830 122 50 38" fill="none"><g stroke="#5e5e5e" stroke-width="2.5" stroke-linecap="round" fill="none"><path d="M1847 148.6 C1842 146.3 1838.3 143.7 1835.8 140.7 C1839.8 135 1845.5 131 1852 129.6"/><path d="M1867.2 133.2 C1870 135.2 1872.4 137.8 1874.2 140.7 C1870 147 1863.5 151.8 1855.8 152.6"/><path d="M1862 127.8 L1847.6 154" stroke-width="3.3"/><path d="M1850.5 146.5 A6.3 6.3 0 0 1 1855 133.6" stroke-width="2.8"/><path d="M1859.8 137.3 A6.3 6.3 0 0 1 1857.8 147.2"/></g></svg>
<svg class="r" style="left:1899px;top:122px;width:36px;height:36px;" viewBox="0 0 36 36" fill="none"><circle cx="18" cy="18" r="16.5" stroke="#6a6a6a" stroke-width="1.8"/></svg>
<svg class="r" style="left:1959px;top:122px;width:36px;height:36px;" viewBox="0 0 36 36" fill="none"><circle cx="18" cy="18" r="16.5" stroke="#6a6a6a" stroke-width="1.8"/></svg>
<svg class="r" style="left:1906px;top:130px;width:22px;height:20px;" viewBox="0 0 22 20" fill="none"><path d="M8 4L3 9l5 5M3 9h10a5 5 0 0 1 5 5v2" stroke="#6a6a6a" stroke-width="1.8" stroke-linecap="round" stroke-linejoin="round"/></svg>
<svg class="r" style="left:1966px;top:130px;width:22px;height:20px;" viewBox="0 0 22 20" fill="none"><path d="M14 4l5 5-5 5M19 9H9a5 5 0 0 0-5 5v2" stroke="#6a6a6a" stroke-width="1.8" stroke-linecap="round" stroke-linejoin="round"/></svg>
<svg class="r" style="left:2020px;top:124px;width:34px;height:33px;" viewBox="0 0 32 32" fill="none"><g stroke="#cfcfcf" stroke-width="1.8" stroke-linejoin="round"><path d="M2 3a1 1 0 0 1 1-1h22l5 5v22a1 1 0 0 1-1 1H3a1 1 0 0 1-1-1z"/><path d="M10 2v6h10V2M7.5 30v-7a1 1 0 0 1 1-1h15a1 1 0 0 1 1 1v7"/></g></svg>
<div class="r" style="left:2067px;top:110px;width:2px;height:60px;background:#4a4a4a;border-radius:0px;"></div>
<div class="r" style="left:2089px;top:120px;width:196px;height:40px;background:#2b2b2b;border-radius:9px;"></div>
<div class="r" style="left:2117px;top:138px;width:27px;height:2px;background:#c8c8c8;border-radius:0px;"></div>
<div class="t" style="left:2160.75px;top:127.68px;font-size:24px;color:#cccccc;letter-spacing:-0.67px;-webkit-text-stroke:0.31px #cccccc;">100%</div>
<div class="r" style="left:2233px;top:138.5px;width:27px;height:2.0px;background:#c8c8c8;border-radius:0px;"></div>
<div class="r" style="left:2245.5px;top:126px;width:2.0px;height:27px;background:#c8c8c8;border-radius:0px;"></div>
<svg class="r" style="left:2295px;top:122px;width:46px;height:39px;" viewBox="0 0 46 39" fill="none"><g stroke="#cfcfcf" stroke-width="1.8" stroke-linejoin="round"><path d="M24 28H4a2 2 0 0 1-2-2V4a2 2 0 0 1 2-2h34a2 2 0 0 1 2 2v6"/><rect x="26" y="12" width="17" height="25" rx="2"/><path d="M8.5 12v4M33 16h3M34.5 31v0.5"/></g></svg>
<div class="r" style="left:2372px;top:121px;width:30px;height:38px;background:#2b2b2b;border-radius:4px 0 0 4px;"></div>
<svg class="r" style="left:2377px;top:130px;width:20px;height:20px;" viewBox="0 0 20 20" fill="none"><path d="M4 4l6 6-6 6M10 4l6 6-6 6" stroke="#c8c8c8" stroke-width="1.6" stroke-linecap="round" stroke-linejoin="round"/></svg>
<div class="t" style="left:554.95px;top:2149.83px;font-size:25px;color:#4aa0f0;letter-spacing:-0.46px;-webkit-text-stroke:0.33px #4aa0f0;">mainpage</div>
<div class="r" style="left:1064px;top:321px;width:773px;height:1676px;background:#ffffff;border-radius:24px 24px 22px 22px;border-top:2px solid #8db9f2;border-left:2px dotted #4a8de6;border-right:2px dotted #4a8de6;border-bottom:2px dotted #4a8de6"></div>
<div class="r" style="left:1067px;top:483px;width:767px;height:1350px;background:#efefef;border-radius:0 0 22px 22px;border:1px dashed #cfcfcf;border-top:1.5px dotted #c8c8c8"></div>
<div class="r" style="left:1088px;top:390.5px;width:48px;height:2.5px;background:#4a4a4a;border-radius:0px;"></div>
<div class="r" style="left:1088px;top:404px;width:48px;height:2.5px;background:#4a4a4a;border-radius:0px;"></div>
<div class="r" style="left:1088px;top:417.5px;width:48px;height:2.5px;background:#4a4a4a;border-radius:0px;"></div>
<div class="t" style="left:1346.50px;top:377.86px;font-size:48px;color:#2a2935;letter-spacing:1.38px;-webkit-text-stroke:0.62px #2a2935;">Title</div>
<svg class="r" style="left:1740px;top:368px;width:74px;height:74px;" viewBox="1740 368 74 74" fill="none"><path d="M1772.86 383.70 L1773.65 377.70 L1780.35 377.70 L1781.14 383.70 L1789.13 387.01 L1793.93 383.33 L1798.67 388.07 L1794.99 392.87 L1798.30 400.86 L1804.30 401.65 L1804.30 408.35 L1798.30 409.14 L1794.99 417.13 L1798.67 421.93 L1793.93 426.67 L1789.13 422.99 L1781.14 426.30 L1780.35 432.30 L1773.65 432.30 L1772.86 426.30 L1764.87 422.99 L1760.07 426.67 L1755.33 421.93 L1759.01 417.13 L1755.70 409.14 L1749.70 408.35 L1749.70 401.65 L1755.70 400.86 L1759.01 392.87 L1755.33 388.07 L1760.07 383.33 L1764.87 387.01Z" stroke="#2a2935" stroke-width="2.9" stroke-linejoin="miter"/><circle cx="1777" cy="405" r="5.7" stroke="#2a2935" stroke-width="2.9"/></svg>
<svg class="r" style="left:1110px;top:1850px;width:290px;height:95px;" viewBox="1110 1850 290 95" fill="none"><g stroke="#5b7be6" stroke-width="4.3" fill="none"><path d="M1128.1 1898.2 L1159 1869.6 Q1161.6 1867.2 1164.2 1869.6 L1195.2 1898.2"/><path d="M1137 1903 V1927.4 H1155 V1911.9 A6.8 6.8 0 0 1 1168.6 1911.9 V1927.4 H1186.7 V1903"/><path d="M1316.1 1914.9 L1337.5 1894.6 Q1340.5 1891.8 1343.5 1894.6 L1354 1904.5 Q1357 1907.3 1360 1904.5 L1383.2 1880"/><path d="M1363.1 1879.1 H1383.8 V1898.9" stroke-linejoin="miter"/></g></svg>
<svg class="r" style="left:1500px;top:1855px;width:280px;height:85px;" viewBox="1500 1855 280 85" fill="none"><g stroke="#5b7be6" stroke-width="4.1" fill="none"><path d="M1537.8 1863 V1869.8"/><path d="M1507.5 1917.3 C1512 1913 1513.8 1907 1514.2 1900 L1515 1892 C1515 1877 1524 1869.8 1537.8 1869.8 C1551.6 1869.8 1560.6 1877 1560.6 1892 L1561.4 1900 C1561.8 1907 1563.6 1913 1568.1 1917.3 Z" stroke-linejoin="miter" stroke-miterlimit="1.6"/><path d="M1531 1926.5 Q1537.8 1934 1544.6 1926.5"/><path d="M1725.70 1870.10 L1726.63 1869.98 L1727.59 1869.65 L1728.60 1869.11 L1729.71 1868.18 L1731.02 1866.55 L1732.52 1864.62 L1734.02 1863.34 L1735.42 1862.80 L1736.71 1862.81 L1737.91 1863.16 L1739.01 1863.77 L1739.89 1864.83 L1740.44 1866.48 L1740.62 1868.65 L1740.71 1870.70 L1741.05 1872.13 L1741.58 1873.16 L1742.18 1874.02 L1742.82 1874.79 L1743.49 1875.50 L1744.18 1876.18 L1744.87 1876.85 L1745.55 1877.53 L1746.22 1878.22 L1746.90 1878.91 L1747.61 1879.58 L1748.38 1880.22 L1749.24 1880.82 L1750.27 1881.35 L1751.70 1881.69 L1753.75 1881.78 L1755.92 1881.96 L1757.57 1882.51 L1758.63 1883.39 L1759.24 1884.49 L1759.59 1885.69 L1759.60 1886.98 L1759.06 1888.38 L1757.78 1889.88 L1755.85 1891.38 L1754.22 1892.69 L1753.29 1893.80 L1752.75 1894.81 L1752.42 1895.77 L1752.30 1896.70 L1752.42 1897.63 L1752.75 1898.59 L1753.29 1899.60 L1754.22 1900.71 L1755.85 1902.02 L1757.78 1903.52 L1759.06 1905.02 L1759.60 1906.42 L1759.59 1907.71 L1759.24 1908.91 L1758.63 1910.01 L1757.57 1910.89 L1755.92 1911.44 L1753.75 1911.62 L1751.70 1911.71 L1750.27 1912.05 L1749.24 1912.58 L1748.38 1913.18 L1747.61 1913.82 L1746.90 1914.49 L1746.22 1915.18 L1745.55 1915.87 L1744.87 1916.55 L1744.18 1917.22 L1743.49 1917.90 L1742.82 1918.61 L1742.18 1919.38 L1741.58 1920.24 L1741.05 1921.27 L1740.71 1922.70 L1740.62 1924.75 L1740.44 1926.92 L1739.89 1928.57 L1739.01 1929.63 L1737.91 1930.24 L1736.71 1930.59 L1735.42 1930.60 L1734.02 1930.06 L1732.52 1928.78 L1731.02 1926.85 L1729.71 1925.22 L1728.60 1924.29 L1727.59 1923.75 L1726.63 1923.42 L1725.70 1923.30 L1724.77 1923.42 L1723.81 1923.75 L1722.80 1924.29 L1721.69 1925.22 L1720.38 1926.85 L1718.88 1928.78 L1717.38 1930.06 L1715.98 1930.60 L1714.69 1930.59 L1713.49 1930.24 L1712.39 1929.63 L1711.51 1928.57 L1710.96 1926.92 L1710.78 1924.75 L1710.69 1922.70 L1710.35 1921.27 L1709.82 1920.24 L1709.22 1919.38 L1708.58 1918.61 L1707.91 1917.90 L1707.22 1917.22 L1706.53 1916.55 L1705.85 1915.87 L1705.18 1915.18 L1704.50 1914.49 L1703.79 1913.82 L1703.02 1913.18 L1702.16 1912.58 L1701.13 1912.05 L1699.70 1911.71 L1697.65 1911.62 L1695.48 1911.44 L1693.83 1910.89 L1692.77 1910.01 L1692.16 1908.91 L1691.81 1907.71 L1691.80 1906.42 L1692.34 1905.02 L1693.62 1903.52 L1695.55 1902.02 L1697.18 1900.71 L1698.11 1899.60 L1698.65 1898.59 L1698.98 1897.63 L1699.10 1896.70 L1698.98 1895.77 L1698.65 1894.81 L1698.11 1893.80 L1697.18 1892.69 L1695.55 1891.38 L1693.62 1889.88 L1692.34 1888.38 L1691.80 1886.98 L1691.81 1885.69 L1692.16 1884.49 L1692.77 1883.39 L1693.83 1882.51 L1695.48 1881.96 L1697.65 1881.78 L1699.70 1881.69 L1701.13 1881.35 L1702.16 1880.82 L1703.02 1880.22 L1703.79 1879.58 L1704.50 1878.91 L1705.18 1878.22 L1705.85 1877.53 L1706.53 1876.85 L1707.22 1876.18 L1707.91 1875.50 L1708.58 1874.79 L1709.22 1874.02 L1709.82 1873.16 L1710.35 1872.13 L1710.69 1870.70 L1710.78 1868.65 L1710.96 1866.48 L1711.51 1864.83 L1712.39 1863.77 L1713.49 1863.16 L1714.69 1862.81 L1715.98 1862.80 L1717.38 1863.34 L1718.88 1864.62 L1720.38 1866.55 L1721.69 1868.18 L1722.80 1869.11 L1723.81 1869.65 L1724.77 1869.98Z" stroke-linejoin="round"/><circle cx="1725.7" cy="1896.7" r="13.4"/></g></svg>
<div class="t" style="left:1130.25px;top:1952.04px;font-size:28px;color:#5b7fe6;letter-spacing:0.92px;-webkit-text-stroke:0.36px #5b7fe6;">Home</div>
<div class="t" style="left:1300.50px;top:1952.04px;font-size:28px;color:#5b7fe6;letter-spacing:0.19px;-webkit-text-stroke:0.36px #5b7fe6;">Analytics</div>
<div class="t" style="left:1508.75px;top:1952.04px;font-size:28px;color:#5b7fe6;letter-spacing:0.25px;-webkit-text-stroke:0.36px #5b7fe6;">Alerts</div>
<div class="t" style="left:1681.25px;top:1952.04px;font-size:28px;color:#5b7fe6;letter-spacing:0.25px;-webkit-text-stroke:0.36px #5b7fe6;">Settings</div>
<div class="r" style="left:1491px;top:102px;width:320px;height:144px;background:#1a1a1a;border-radius:2px;border:2px solid #363636;box-shadow:0 4px 12px rgba(0,0,0,0.4)"></div>
<svg class="r" style="left:1525px;top:127px;width:22px;height:27px;" viewBox="0 0 22 27" fill="none"><path d="M3 2.5 L19 13.5 L3 24.5Z" stroke="#bdbdbd" stroke-width="1.5" stroke-linejoin="miter"/></svg>
<svg class="r" style="left:1525px;top:188px;width:22px;height:27px;" viewBox="0 0 22 27" fill="none"><path d="M3 2.5 L19 13.5 L3 24.5Z" stroke="#bdbdbd" stroke-width="1.5" stroke-linejoin="miter"/></svg>
<div class="t" style="left:1556.25px;top:131.95px;font-size:22.5px;color:#cacaca;letter-spacing:0.75px;-webkit-text-stroke:0.29px #cacaca;">Preview</div>
<div class="t" style="left:1557.00px;top:192.95px;font-size:22.5px;color:#cacaca;letter-spacing:0.42px;-webkit-text-stroke:0.29px #cacaca;">Clean Preview</div>
<div class="r" style="left:1469px;top:85px;width:365px;height:180px;background:transparent;border-radius:15px;border:8px solid #ee8833"></div>
<div class="t" style="left:2426.50px;top:127.04px;font-size:28px;color:#f2f2f2;letter-spacing:-0.08px;-webkit-text-stroke:0.73px #f2f2f2;">wm-page: mainpage</div>
<svg class="r" style="left:2439px;top:197px;width:38px;height:38px;" viewBox="0 0 24 24" fill="none"><g stroke="#f0f0f0" stroke-width="1.3" stroke-linejoin="round" stroke-linecap="round"><path d="M11 3H4.5A2.5 2.5 0 0 0 2 5.5v14A2.5 2.5 0 0 0 4.5 22h14a2.5 2.5 0 0 0 2.5-2.5V13"/><path d="M18.5 1.8a2.1 2.1 0 0 1 3 3L12.5 13.8 8.5 15l1.2-4z"/></g></svg>
<svg class="r" style="left:2551px;top:197px;width:38px;height:38px;" viewBox="0 0 24 24" fill="none"><g stroke="#c8c8c8" stroke-width="1.2"><path d="M12 1.5C6.2 1.5 1.5 6.2 1.5 12c0 3.5 1.5 8 3.5 9 2 1 3-1 3-3s1.5-3.5 3.5-3 2 3 4 3.5c2 .5 4-.5 5.5-3 1-1.5 1.5-3 1.5-4.5C22.5 6.2 17.8 1.5 12 1.5z"/><circle cx="8" cy="6.5" r="1.3"/><circle cx="13.5" cy="5.5" r="1.3"/><circle cx="18" cy="9.5" r="1.3"/><circle cx="15.5" cy="15.5" r="1.8"/></g></svg>
<svg class="r" style="left:2664px;top:197px;width:36px;height:38px;" viewBox="0 0 24 24" fill="none"><g stroke="#c8c8c8" stroke-width="1.2" stroke-linejoin="round"><path d="M11 22.5A10.5 10.5 0 1 1 22.5 12"/><path d="M13.5 13.5l9 3.5-4 1.5-1.5 4.5z"/></g></svg>
<svg class="r" style="left:2776px;top:197px;width:37px;height:38px;" viewBox="0 0 24 24" fill="none"><g stroke="#c8c8c8" stroke-width="1.2" stroke-linejoin="round"><path d="M20 7V3.5a1.5 1.5 0 0 0-1.5-1.5h-15A1.5 1.5 0 0 0 2 3.5v10A1.5 1.5 0 0 0 3.5 15H10"/><path d="M8 22.5h2.5v-7.5"/><rect x="12" y="9" width="10" height="13.5" rx="1.5"/><circle cx="17" cy="19" r="0.5"/></g></svg>
<svg class="r" style="left:2887px;top:197px;width:37px;height:38px;" viewBox="0 0 24 24" fill="none"><g stroke="#c8c8c8" stroke-width="1.2" stroke-linejoin="round"><path d="M12 1.5l9.5 4v10L12 22.5 2.5 15.5v-10z"/><circle cx="12" cy="10" r="2"/><path d="M12 12v4"/></g></svg>
<div class="r" style="left:2418px;top:267px;width:528px;height:56px;background:#222222;border-radius:6px;border:2px solid #454545"></div>
<svg class="r" style="left:2437px;top:280px;width:26px;height:26px;" viewBox="0 0 24 24" fill="none"><g stroke="#bdbdbd" stroke-width="1.6" stroke-linecap="round"><circle cx="10" cy="10" r="7.5"/><path d="M15.5 15.5l6 6"/></g></svg>
<div class="t" style="left:2473.50px;top:283.37px;font-size:22px;color:#bdbdbd;letter-spacing:-0.22px;-webkit-text-stroke:0.29px #bdbdbd;">Search...</div>
<div class="t" style="left:2422.25px;top:362.58px;font-size:25px;color:#f2f2f2;letter-spacing:0.71px;-webkit-text-stroke:0.65px #f2f2f2;">Accessibility</div>
<div class="t" style="left:2420.75px;top:422.18px;font-size:24px;color:#bdbdbd;letter-spacing:0.83px;-webkit-text-stroke:0.31px #bdbdbd;">Hint</div>
<div class="r" style="left:2422px;top:461px;width:444px;height:56px;background:#222222;border-radius:7px;border:2px solid #454545"></div>
<svg class="r" style="left:2876px;top:477px;width:28px;height:28px;" viewBox="0 0 24 24" fill="none"><g stroke="#c8c8c8" stroke-width="1.5" stroke-linecap="round"><path d="M10 14a4 4 0 0 0 5.5 0l5-5a4 4 0 0 0-5.5-5.5l-1.5 1.5"/><path d="M14 10a4 4 0 0 0-5.5 0l-5 5a4 4 0 0 0 5.5 5.5l1.5-1.5"/></g></svg>
<div class="t" style="left:2420.75px;top:580.08px;font-size:25px;color:#f2f2f2;letter-spacing:0.54px;-webkit-text-stroke:0.65px #f2f2f2;">Behavior</div>
<div class="t" style="left:2421.50px;top:640.93px;font-size:24px;color:#bdbdbd;letter-spacing:-0.19px;-webkit-text-stroke:0.31px #bdbdbd;">Cache</div>
<div class="t" style="left:2420.75px;top:717.68px;font-size:24px;color:#bdbdbd;letter-spacing:0.05px;-webkit-text-stroke:0.31px #bdbdbd;">Refresh data on attach</div>
<div class="r" style="left:2766px;top:632px;width:74px;height:42px;background:#c4c4c4;border-radius:21px;"></div>
<div class="r" style="left:2798px;top:632px;width:42px;height:42px;background:#4394e8;border-radius:21px;"></div>
<div class="r" style="left:2766px;top:709px;width:74px;height:42px;background:#c4c4c4;border-radius:21px;"></div>
<div class="r" style="left:2798px;top:709px;width:42px;height:42px;background:#4394e8;border-radius:21px;"></div>
<div class="t" style="left:2421.00px;top:819.58px;font-size:25px;color:#f2f2f2;letter-spacing:0.38px;-webkit-text-stroke:0.65px #f2f2f2;">Scroll Behavior</div>
<div class="t" style="left:2421.75px;top:878.93px;font-size:24px;color:#bdbdbd;letter-spacing:-0.22px;-webkit-text-stroke:0.31px #bdbdbd;">On Scroll</div>
<div class="t" style="left:2421.00px;top:1037.83px;font-size:25px;color:#f2f2f2;letter-spacing:0.62px;-webkit-text-stroke:0.65px #f2f2f2;">System Bars Customisation</div>
<div class="t" style="left:2421.75px;top:1096.68px;font-size:24px;color:#bdbdbd;letter-spacing:-0.17px;-webkit-text-stroke:0.31px #bdbdbd;">Status Bar Style</div>
<div class="t" style="left:2420.75px;top:1226.68px;font-size:24px;color:#bdbdbd;letter-spacing:-0.04px;-webkit-text-stroke:0.31px #bdbdbd;">Navigation Bar Style</div>
<div class="r" style="left:2422px;top:919.5px;width:444px;height:55.0px;background:#222222;border-radius:7px;border:2px solid #454545"></div>
<div class="t" style="left:2442.75px;top:934.18px;font-size:24px;color:#c8c8c8;letter-spacing:-0.79px;-webkit-text-stroke:0.31px #c8c8c8;">Default</div>
<svg class="r" style="left:2838px;top:939.0px;width:22px;height:16.0px;" viewBox="0 0 22 16" fill="none"><path d="M2 4l9 9 9-9" stroke="#c8c8c8" stroke-width="1.8" stroke-linecap="round" stroke-linejoin="round"/></svg>
<div class="r" style="left:2422px;top:1137px;width:444px;height:54.5px;background:#222222;border-radius:7px;border:2px solid #454545"></div>
<div class="t" style="left:2442.75px;top:1151.18px;font-size:24px;color:#c8c8c8;letter-spacing:-0.79px;-webkit-text-stroke:0.31px #c8c8c8;">Default</div>
<svg class="r" style="left:2838px;top:1156.25px;width:22px;height:16.0px;" viewBox="0 0 22 16" fill="none"><path d="M2 4l9 9 9-9" stroke="#c8c8c8" stroke-width="1.8" stroke-linecap="round" stroke-linejoin="round"/></svg>
<div class="r" style="left:2422px;top:1266px;width:444px;height:55.5px;background:#222222;border-radius:7px;border:2px solid #454545"></div>
<div class="t" style="left:2442.75px;top:1281.68px;font-size:24px;color:#c8c8c8;letter-spacing:-0.50px;-webkit-text-stroke:0.31px #c8c8c8;">Light</div>
<svg class="r" style="left:2838px;top:1285.75px;width:22px;height:16.0px;" viewBox="0 0 22 16" fill="none"><path d="M2 4l9 9 9-9" stroke="#c8c8c8" stroke-width="1.8" stroke-linecap="round" stroke-linejoin="round"/></svg>
<div class="t" style="left:2420.75px;top:1385.08px;font-size:25px;color:#f2f2f2;letter-spacing:0.45px;-webkit-text-stroke:0.65px #f2f2f2;">Page Params</div>
<div class="r" style="left:2423px;top:1439px;width:459px;height:56px;background:#262626;border-radius:0px;"></div>
<div class="r" style="left:2423px;top:1495px;width:459px;height:74px;background:#303030;border-radius:0px;"></div>
<div class="r" style="left:2681px;top:1439px;width:2px;height:130px;background:#262626;border-radius:0px;"></div>
<div class="r" style="left:2839px;top:1439px;width:2px;height:130px;background:#262626;border-radius:0px;"></div>
<div class="t" style="left:2432.50px;top:1454.68px;font-size:24px;color:#f2f2f2;letter-spacing:0.75px;-webkit-text-stroke:0.62px #f2f2f2;">Name</div>
<div class="t" style="left:2692.75px;top:1454.68px;font-size:24px;color:#f2f2f2;letter-spacing:-0.08px;-webkit-text-stroke:0.62px #f2f2f2;">Type</div>
<div class="r" style="left:2433px;top:1504.5px;width:240px;height:55.0px;background:#222222;border-radius:7px;border:2px solid #454545"></div>
<div class="t" style="left:2452.50px;top:1521.37px;font-size:22px;color:#8f8f8f;letter-spacing:0.12px;-webkit-text-stroke:0.29px #8f8f8f;">parameter name</div>
<div class="r" style="left:2692px;top:1504.5px;width:138px;height:55.0px;background:#222222;border-radius:7px;border:2px solid #454545"></div>
<div class="t" style="left:2712.50px;top:1520.95px;font-size:22.5px;color:#cfcfcf;letter-spacing:0.35px;-webkit-text-stroke:0.29px #cfcfcf;">string</div>
<svg class="r" style="left:2802px;top:1524px;width:22px;height:16px;" viewBox="0 0 22 16" fill="none"><path d="M2 4l9 9 9-9" stroke="#c8c8c8" stroke-width="1.8" stroke-linecap="round" stroke-linejoin="round"/></svg>
<svg class="r" style="left:2846px;top:1519px;width:28px;height:28px;" viewBox="0 0 24 24" fill="none"><path d="M12 1.5v21M1.5 12h21" stroke="#8a8a8a" stroke-width="1.3"/></svg>
<svg class="r" style="left:2938px;top:2166px;width:24px;height:24px;" viewBox="2938 2166 24 24" fill="none"><path d="M2962 2170 A20 20 0 0 1 2942 2190 L2962 2190 Z" fill="#8a6d62"/><path d="M2961 2170 A19 19 0 0 1 2942 2189" stroke="#575757" stroke-width="2"/></svg>
<svg class="r" style="left:0px;top:2166px;width:24px;height:24px;" viewBox="0 2166 24 24" fill="none"><path d="M0 2170 A20 20 0 0 0 20 2190 L0 2190 Z" fill="#15171c"/><path d="M1 2170 A19 19 0 0 0 20 2189" stroke="#575757" stroke-width="2"/></svg>
</body></html>
